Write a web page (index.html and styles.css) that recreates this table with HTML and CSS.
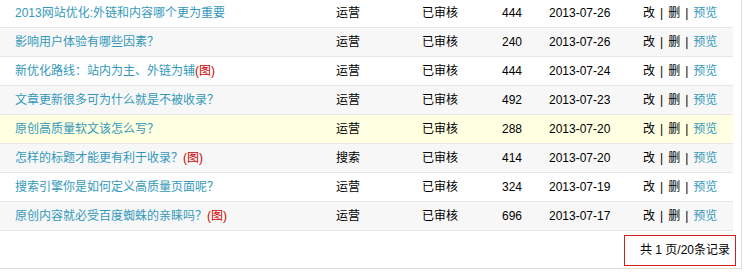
FILE: index.html
```html
<!DOCTYPE html>
<html lang="zh-CN">
<head>
<meta charset="utf-8">
<title>文章列表</title>
<link rel="stylesheet" href="styles.css">
</head>
<body>
<div class="panel">
  <table class="list">
    <colgroup>
      <col class="c-title"><col class="c-type"><col class="c-state"><col class="c-num"><col class="c-date"><col class="c-act">
    </colgroup>
    <tbody>
      <tr><td><a class="t">2013网站优化:外链和内容哪个更为重要</a></td><td>运营</td><td>已审核</td><td>444</td><td>2013-07-26</td><td>改<span class="sep">|</span>删<span class="sep">|</span><a class="t">预览</a></td></tr>
      <tr class="alt"><td><a class="t">影响用户体验有哪些因素？</a></td><td>运营</td><td>已审核</td><td>240</td><td>2013-07-26</td><td>改<span class="sep">|</span>删<span class="sep">|</span><a class="t">预览</a></td></tr>
      <tr><td><a class="t">新优化路线：站内为主、外链为辅</a><span class="pic">(图)</span></td><td>运营</td><td>已审核</td><td>444</td><td>2013-07-24</td><td>改<span class="sep">|</span>删<span class="sep">|</span><a class="t">预览</a></td></tr>
      <tr class="alt"><td><a class="t">文章更新很多可为什么就是不被收录？</a></td><td>运营</td><td>已审核</td><td>492</td><td>2013-07-23</td><td>改<span class="sep">|</span>删<span class="sep">|</span><a class="t">预览</a></td></tr>
      <tr class="hover"><td><a class="t">原创高质量软文该怎么写？</a></td><td>运营</td><td>已审核</td><td>288</td><td>2013-07-20</td><td>改<span class="sep">|</span>删<span class="sep">|</span><a class="t">预览</a></td></tr>
      <tr class="alt"><td><a class="t">怎样的标题才能更有利于收录？</a><span class="pic">(图)</span></td><td>搜索</td><td>已审核</td><td>414</td><td>2013-07-20</td><td>改<span class="sep">|</span>删<span class="sep">|</span><a class="t">预览</a></td></tr>
      <tr><td><a class="t">搜索引擎你是如何定义高质量页面呢？</a></td><td>运营</td><td>已审核</td><td>324</td><td>2013-07-19</td><td>改<span class="sep">|</span>删<span class="sep">|</span><a class="t">预览</a></td></tr>
      <tr class="alt"><td><a class="t">原创内容就必受百度蜘蛛的亲睐吗？</a><span class="pic">(图)</span></td><td>运营</td><td>已审核</td><td>696</td><td>2013-07-17</td><td>改<span class="sep">|</span>删<span class="sep">|</span><a class="t">预览</a></td></tr>
    </tbody>
  </table>
  <div class="pager-row">
    <div class="pager">共 1 页/20条记录</div>
  </div>
</div>
</body>
</html>
```
FILE: styles.css
```css
html, body {
  margin: 0;
  padding: 0;
  background: #fff;
}
body {
  font-family: "Liberation Sans", "Noto Sans CJK SC", sans-serif;
  font-size: 12px;
  color: #000;
}
.panel {
  width: 742px;
  height: 270px;
  margin-top: -1px;
  border-right: 1px solid #dcdcdc;
  border-bottom: 1px solid #dcdcdc;
  box-sizing: border-box;
  display: flex;
  flex-direction: column;
}
.list {
  width: 733px;
  border-collapse: collapse;
  table-layout: fixed;
}
.c-title { width: 321px; }
.c-type { width: 86px; }
.c-state { width: 80px; }
.c-num { width: 47px; }
.c-date { width: 94px; }
.c-act { width: 105px; }
.list td {
  height: 28px;
  padding: 0 0 0 15px;
  border-bottom: 1px solid #e6e6e6;
  white-space: nowrap;
  vertical-align: middle;
  line-height: 16px;
}
.list tr.alt td { background: #f7f7f7; }
.list tr.hover td { background: #ffffe1; }
.t {
  color: #3399bb;
  text-decoration: none;
}
.sep { margin: 0 5px; }
.pic { color: #cc0000; }
.pager-row {
  display: flex;
  justify-content: flex-end;
  padding: 4px 5px 0 0;
}
.pager {
  height: 29px;
  line-height: 29px;
  border: 1px solid #cc2222;
  padding: 0 5px 0 15px;
  white-space: nowrap;
}
```
